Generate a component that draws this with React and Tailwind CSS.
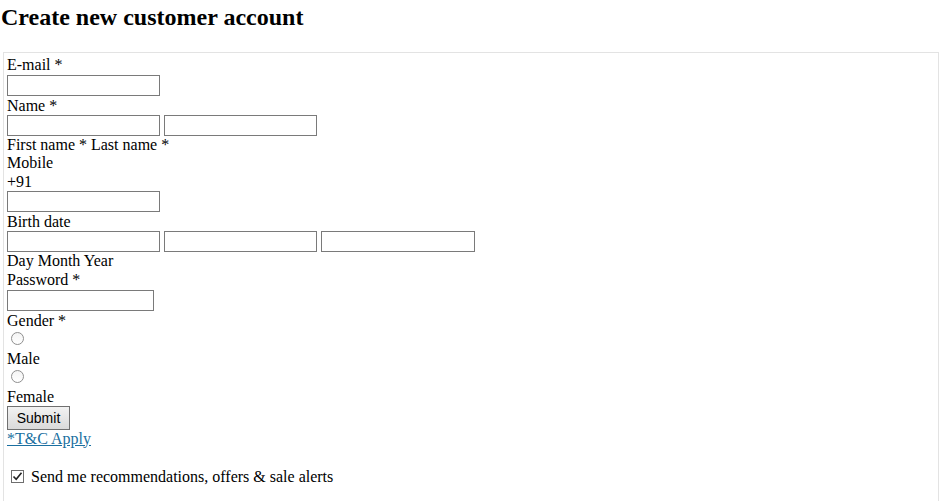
import React from "react";

const serif = "font-['Liberation_Serif','Times_New_Roman',serif]";

const TextInput = ({ w = "w-[153px]", type = "text" }) => (
  <input
    type={type}
    className={`${w} h-[21px] border border-[#7a7a7a] bg-white px-[2px] text-[13px] outline-none`}
  />
);

const Radio = ({ name }) => (
  <div className="h-[19px] flex items-start">
    <input
      type="radio"
      name={name}
      className="appearance-none w-[13px] h-[13px] mt-[2px] ml-[4px] rounded-full border border-[#8f8f8f] bg-gradient-to-b from-[#f4f4f4] to-white"
    />
  </div>
);

const App = () => {
  return (
    <div className={`w-[940px] h-[501px] overflow-hidden bg-white text-black ${serif}`}>
      <h1 className="pl-[1px] pt-[3px] text-[24px] leading-[28px] font-bold">
        Create new customer account
      </h1>

      <form className="mt-[21px] ml-[3px] mr-[1px] border border-[#e3e3e3] border-b-0 px-[3px] pt-[2px] text-[16px] leading-[19px]">
        <div className="h-[19px]">E-mail *</div>
        <TextInput type="email" />

        <div className="h-[19px]">Name *</div>
        <div className="flex gap-[4px]">
          <TextInput />
          <TextInput />
        </div>
        <div className="h-[18px] leading-[18px]">First name * Last name *</div>

        <div className="h-[18px] leading-[18px]">Mobile</div>
        <div className="h-[19px]">+91</div>
        <TextInput type="tel" />

        <div className="h-[19px]">Birth date</div>
        <div className="flex gap-[4px]">
          <TextInput />
          <TextInput />
          <TextInput w="w-[154px]" />
        </div>
        <div className="h-[18px] leading-[18px]">Day Month Year</div>

        <div className="h-[19px]">Password *</div>
        <TextInput type="password" w="w-[147px]" />

        <div className="h-[19px]">Gender *</div>
        <Radio name="gender" />
        <div className="h-[19px]">Male</div>
        <Radio name="gender" />
        <div className="h-[19px]">Female</div>

        <button
          type="button"
          className="block w-[63px] h-[24px] border border-[#707070] bg-gradient-to-b from-[#f2f2f2] to-[#dadada] font-['Liberation_Sans',Arial,sans-serif] text-[14px] leading-[22px] text-black"
        >
          Submit
        </button>
        <a href="#" className="block h-[18px] leading-[18px] text-[#1a6fa0] underline w-max">
          *T&amp;C Apply
        </a>

        <label className="mt-[19px] flex items-center h-[19px]">
          <span className="ml-[4px] w-[13px] h-[13px] border border-[#6e6e6e] bg-white flex items-center justify-center">
            <svg width="11" height="11" viewBox="0 0 11 11">
              <path d="M1.5 5.5 L4.2 8.3 L9.5 1.8" fill="none" stroke="#222" strokeWidth="1.6" />
            </svg>
          </span>
          <span className="ml-[7px] mt-[1px]">Send me recommendations, offers &amp; sale alerts</span>
        </label>
        <div className="h-[30px]" />
      </form>
    </div>
  );
};

export default App;
